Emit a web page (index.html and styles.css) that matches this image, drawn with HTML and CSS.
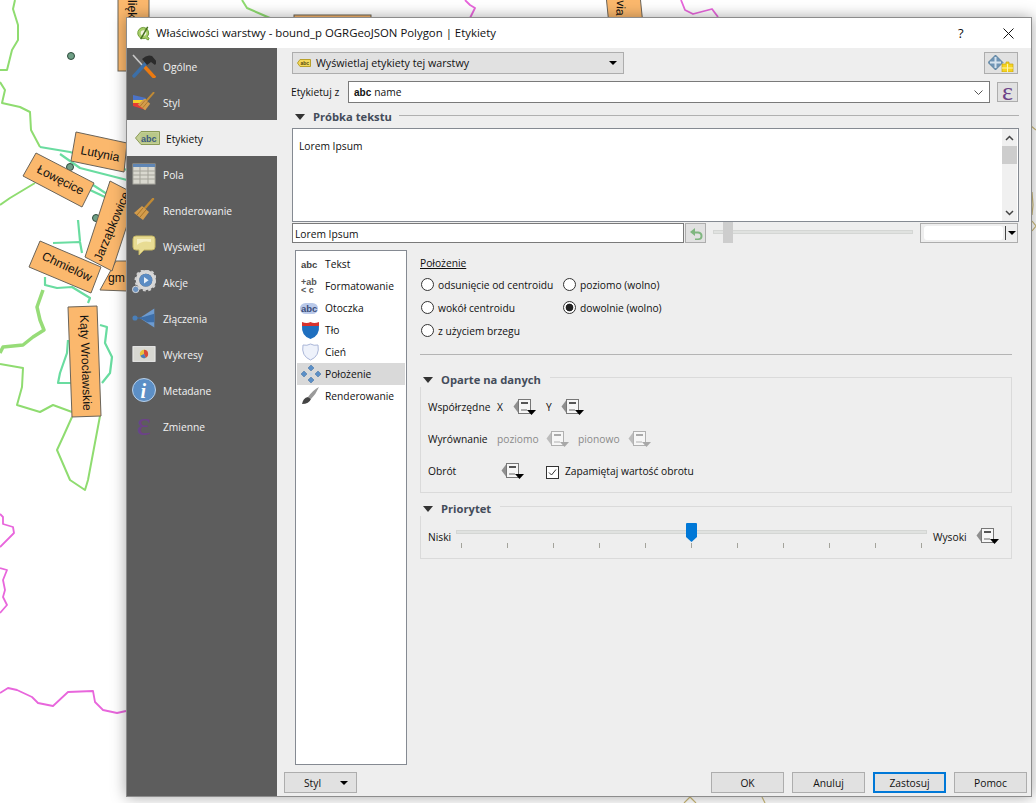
FILE: index.html
```html
<!DOCTYPE html>
<html lang="pl">
<head>
<meta charset="utf-8">
<title>Właściwości warstwy</title>
<link rel="stylesheet" href="styles.css">
</head>
<body>
<svg class="defs" width="0" height="0" aria-hidden="true">
  <defs>
    <symbol id="dd" viewBox="0 0 23 16">
      <path d="M5 1.500 0.500 7.500 5 13.500Z" fill="#8f8f8f"/>
      <rect x="5.500" y="0.500" width="12" height="14" fill="#f6f6f6" stroke="#777"/>
      <path d="M8 4h7" stroke="#555" stroke-width="2"/>
      <path d="M8 11h6" stroke="#666" stroke-width="1"/>
      <path d="M14 11h9l-4.500 5z" fill="#000"/>
    </symbol>
    <symbol id="ddoff" viewBox="0 0 23 16">
      <path d="M5 1.500 0.500 7.500 5 13.500Z" fill="#bcbcbc"/>
      <rect x="5.500" y="0.500" width="12" height="14" fill="#f6f6f6" stroke="#b0b0b0"/>
      <path d="M8 4h7" stroke="#aaa" stroke-width="2"/>
      <path d="M8 11h6" stroke="#b0b0b0" stroke-width="1"/>
      <path d="M14 11h9l-4.500 5z" fill="#a8a8a8"/>
    </symbol>
    <symbol id="brush" viewBox="0 0 24 24">
      <path d="M21 1 13 10" stroke="#c08a35" stroke-width="2.400" stroke-linecap="round"/>
      <path d="M10 8 17 14 11 22 2 15Z" fill="#d39c4c"/>
      <path d="M5 17 11 10M8 19 14 12" stroke="#a87428" stroke-width="1"/>
    </symbol>
    <symbol id="diamonds" viewBox="0 0 20 18">
      <g fill="#5b8fc7" stroke="#3e6c9e" stroke-width=".5">
        <path d="M10 0l3 3-3 3-3-3z"/><path d="M10 12l3 3-3 3-3-3z"/>
        <path d="M3 6l3 3-3 3-3-3z"/><path d="M17 6l3 3-3 3-3-3z"/>
      </g>
      <path d="M10 7l2 2-2 2-2-2z" fill="#c9d6e4"/>
    </symbol>
  </defs>
</svg>

<svg class="map" viewBox="0 0 1036 803" aria-label="Mapa">
  <g class="ln green">
    <polyline points="15,0 13,9 18,25 18,40 12,50 7,70 0,70"/>
    <polyline points="0,82 5,90 2,103 20,107 30,112 31,130 40,147"/>
    <polyline points="35,183 20,192 10,198 0,205"/>
    <polyline points="0,364 23,368 22,387 17,405 40,412 53,405 72,412"/>
    <polyline points="72,417 63,437 57,450 70,480 85,490 88,480 100,416"/>
    <polyline points="242,0 247,8 263,15 270,18"/>
  </g>
  <polyline class="ln thick" points="43,290 37,307 40,320 44,330 33,337 23,345 3,347 0,353"/>
  <g class="ln teal">
    <polyline points="40,147 70,152 127,170"/>
    <polyline points="60,154 80,168 127,180"/>
    <polyline points="90,183 110,196"/>
    <polyline points="90,190 105,197"/>
    <polyline points="45,277 45,285 57,288 72,287 90,298 88,303"/>
    <polyline points="53,243 80,242 82,253"/>
    <polyline points="78,220 80,241"/>
    <polyline points="100,325 107,327 105,343 112,357 110,373 102,383"/>
    <polyline points="68,340 67,353 60,373 58,383 72,383"/>
  </g>
  <g class="ln pink">
    <polyline points="0,693 8,688 17,690 32,697 38,703 53,706 68,692 93,691 95,702 103,710 117,713 126,711"/>
    <polyline points="0,514 3,517 3,524 13,527 14,533 0,547"/>
    <polyline points="0,568 7,570 3,580 5,590 3,597 7,605 0,613"/>
    <polyline points="465,0 470,5 475,8 472,14 470,18"/>
    <polyline points="681,0 685,10 693,14 712,9 718,17"/>
  </g>
  <g class="ln tan">
    <polyline points="1031,126 1036,130"/>
    <polyline points="1032,192 1033,205 1032,215"/>
    <polyline points="1032,221 1036,226 1032,231"/>
    <polyline points="684,803 690,797 696,803"/>
    <polyline points="762,797 765,803"/>
  </g>
  <circle class="dot" cx="71" cy="56" r="3.500"/>
  <circle class="dot" cx="96" cy="218" r="3.500"/>
  <circle class="dot" cx="70" cy="167" r="3.500"/>

  <rect class="lbl" x="118" y="-10" width="31" height="81"/>
  <text class="lbltxt" transform="translate(128,0) rotate(90)">lięk</text>
  <rect class="lbl" x="294" y="15" width="77" height="10"/>
  <polygon class="lbl" points="606,-5 640,-5 643,25 609,25"/>
  <text class="lbltxt" transform="translate(617,0) rotate(93)">via</text>

  <polygon class="lbl" points="76,132 127,143 124,172 71,161"/>
  <text class="lbltxt" transform="translate(80,154) rotate(11)">Lutynia</text>
  <polygon class="lbl" points="36,153 94,183 82,207 23,176"/>
  <text class="lbltxt" transform="translate(36,172) rotate(27)">Łowęcice</text>
  <polygon class="lbl" points="116,261 127,261 127,291 100,290"/>
  <text class="lbltxt" transform="translate(108,282)">gm</text>
  <polygon class="lbl" points="110,181 137,195 112,271 85,257"/>
  <text class="lbltxt" transform="translate(101,262) rotate(-67)">Jarząbkowice</text>
  <polygon class="lbl" points="40,241 101,267 91,293 29,267"/>
  <text class="lbltxt" transform="translate(41,259) rotate(25)">Chmielów</text>
  <polygon class="lbl" points="68,307 97,306 101,416 72,417"/>
  <text class="lbltxt" transform="translate(80,315) rotate(88)">Kąty Wrocławskie</text>
</svg>

<div class="dialog">
  <header class="titlebar">
    <svg class="qgis" viewBox="0 0 16 16">
      <path d="M8 1.500a6 6 0 1 0 2 11.600L13 15l1-2-2-1.500A6 6 0 0 0 8 1.500Z" fill="#a8cf6a" stroke="#6d9a35"/>
      <circle cx="8" cy="7.500" r="3" fill="#f3f3e0"/>
      <path d="M12.500 1 5 14" stroke="#446e1e" stroke-width="1.600"/>
    </svg>
    <span class="title">Właściwości warstwy - bound_p OGRGeoJSON Polygon | Etykiety</span>
    <span class="help">?</span>
    <svg class="close" viewBox="0 0 11 11"><path d="M0.500 0.500l10 10M10.500 0.500l-10 10" stroke="#111" stroke-width="1"/></svg>
  </header>
  <div class="body">
    <nav class="side">
      <div class="item">
        <svg class="sicon" viewBox="0 0 24 24">
          <path d="M1 1 11 12" stroke="#c9c9c9" stroke-width="1.600"/>
          <path d="M11 11 23 24" stroke="#ec7a10" stroke-width="3.600"/>
          <path d="M2 22 14 9" stroke="#3c6fa8" stroke-width="3.400" stroke-linecap="round"/>
          <path d="M10 5Q15 0 20 2L25 8 23 11 19 8 15 11Z" fill="#2b2b2b"/>
        </svg><span>Ogólne</span>
      </div>
      <div class="item">
        <svg class="sicon" viewBox="0 0 24 24">
          <path d="M1 9h13l-2 4H1z" fill="#f3d02a"/><path d="M1 5l13 3-1 2H1z" fill="#4b73c8"/><path d="M1 13h11l2 7-13-4z" fill="#e33c34"/>
          <use href="#brush" x="4" y="2" width="20" height="20"/>
        </svg><span>Styl</span>
      </div>
      <div class="item on">
        <svg class="sicon wide" viewBox="0 0 25 14">
          <path d="M6 .5H24.500V13.500H6L.5 7Z" fill="#c3cf95" stroke="#8c9b57"/>
          <rect x="5.500" y="2" width="17" height="10" fill="#b9c888"/>
          <text class="abc" x="6" y="11">abc</text>
        </svg><span>Etykiety</span>
      </div>
      <div class="item">
        <svg class="sicon" viewBox="0 0 24 24">
          <rect x="1" y="2" width="22" height="20" fill="#d9d8cf" stroke="#a9a9a1"/>
          <rect x="1" y="2" width="22" height="3" fill="#5f86b5"/>
          <path d="M1 9h22M1 13h22M1 17h22M8 5v17M16 5v17" stroke="#a4a39a"/>
        </svg><span>Pola</span>
      </div>
      <div class="item">
        <svg class="sicon" viewBox="0 0 24 24"><use href="#brush" width="24" height="24"/></svg><span>Renderowanie</span>
      </div>
      <div class="item">
        <svg class="sicon" viewBox="0 0 24 24">
          <path d="M4 2H20Q23 2 23 5V13Q23 16 20 16H12L7 21V16H4Q1 16 1 13V5Q1 2 4 2Z" fill="#e8dc93" stroke="#c5b765"/>
          <path d="M5 5H19V8Q10 6 5 11Z" fill="#f5efc5"/>
        </svg><span>Wyświetl</span>
      </div>
      <div class="item">
        <svg class="sicon" viewBox="0 0 26 26">
          <circle cx="15" cy="11" r="9" fill="none" stroke="#d8d8d8" stroke-width="4"/>
          <circle cx="15" cy="11" r="11" fill="none" stroke="#d0d0d0" stroke-width="2.500" stroke-dasharray="3 2.760"/>
          <circle cx="15" cy="11" r="7" fill="#5b8cc4"/>
          <path d="M13 7.500v7l5-3.500z" fill="#e8f0f8"/>
          <circle cx="4" cy="21" r="3.500" fill="#6d93c0" stroke="#ddd"/>
        </svg><span>Akcje</span>
      </div>
      <div class="item">
        <svg class="sicon" viewBox="0 0 28 24">
          <path d="M26 1V23L9 12Z" fill="#6d9bd0"/>
          <path d="M26 7V17H18L9 12Z" fill="#3d6ea8"/>
          <path d="M3 12H12" stroke="#3a6ba3" stroke-width="1.500"/>
          <circle cx="3.500" cy="12" r="3" fill="#4a7fb8"/>
        </svg><span>Złączenia</span>
      </div>
      <div class="item">
        <svg class="sicon" viewBox="0 0 26 18">
          <rect x="1" y="1" width="24" height="16" fill="#d8d8d2" stroke="#f0f0f0"/>
          <circle cx="13" cy="9" r="4.500" fill="#e8c33c"/>
          <path d="M13 9V4.500A4.500 4.500 0 0 1 15 13Z" fill="#d84a3a"/>
          <path d="M13 9 15 13A4.500 4.500 0 0 1 9 11Z" fill="#4a7cc0"/>
        </svg><span>Wykresy</span>
      </div>
      <div class="item">
        <svg class="sicon" viewBox="0 0 24 24">
          <circle cx="12" cy="12" r="11.500" fill="#5c8fc6" stroke="#b9d0e8"/>
          <text class="info" x="8.500" y="20">i</text>
        </svg><span>Metadane</span>
      </div>
      <div class="item">
        <div class="eps">ε</div><span>Zmienne</span>
      </div>
    </nav>
    <main class="main">
      <div class="row1">
        <div class="combo">
          <svg class="tag" viewBox="0 0 14 8">
            <path d="M3 .5H13.500V7.500H3L.5 4Z" fill="#f4d95a" stroke="#b8a02a"/>
            <text class="tagtxt" x="3.500" y="6">abc</text>
          </svg>
          <span class="grow">Wyświetlaj etykiety tej warstwy</span>
          <i class="tri"></i>
        </div>
        <button class="tool">
          <svg class="toolicon" viewBox="0 0 27 17">
            <path d="M7.500 0 15 7.500 7.500 15 0 7.500Z" fill="#6f94b5" stroke="#46708f" stroke-width=".7"/>
            <path d="M7.500 2V13M2 7.500H13" stroke="#d5e2ee" stroke-width="2"/>
            <path d="M14 9h4V7h3v2h4v8H14z" fill="#f5d321" stroke="#c9a70f" stroke-width=".7"/>
            <path d="M19.500 9v8M14 13h11" stroke="#fff6b0"/>
          </svg>
        </button>
      </div>
      <div class="row2">
        <span class="lab-from">Etykietuj z</span>
        <div class="field">
          <b class="abc-mark">abc</b><span class="grow">name</span>
          <svg class="chev" viewBox="0 0 9 5"><path d="M.5 .5l4 4 4-4" fill="none" stroke="#555"/></svg>
        </div>
        <button class="eps-btn"><span>ε</span></button>
      </div>
      <div class="sect">
        <i class="tri big"></i><b class="sect-t">Próbka tekstu</b><span class="sect-line"></span>
      </div>
      <div class="preview">
        <p>Lorem Ipsum</p>
        <div class="sb">
          <svg class="arr" viewBox="0 0 9 6"><path d="M1 5l3.500-3.500L8 5" fill="none" stroke="#444" stroke-width="1.500"/></svg>
          <i class="thumb"></i>
          <span class="grow"></span>
          <svg class="arr" viewBox="0 0 9 6"><path d="M1 1l3.500 3.500L8 1" fill="none" stroke="#444" stroke-width="1.500"/></svg>
        </div>
      </div>
      <div class="row4">
        <div class="sample">Lorem Ipsum</div>
        <button class="undo">
          <svg viewBox="0 0 14 13" width="14" height="13"><path d="M6 1 1 5l5 4V6.500H9Q11.500 6.500 11.500 9T9 11.500H6V13H9.500Q13.500 13 13.500 9T9.500 4.500H6Z" fill="#7fb67f"/></svg>
        </button>
        <div class="hs"><i class="hs-track"></i><i class="hs-handle"></i></div>
        <div class="spin"><span class="spin-in"></span><i class="spin-sep"></i><i class="tri"></i></div>
      </div>
      <div class="lower">
        <ul class="list">
          <li><span class="lic"><b class="ltxt">abc</b></span>Tekst</li>
          <li><span class="lic"><svg viewBox="0 0 19 16" width="19" height="16"><text class="fm1" x="0" y="7">+ab</text><text class="fm1" x="0" y="15">&lt; c</text></svg></span>Formatowanie</li>
          <li><span class="lic"><b class="ltxt halo">abc</b></span>Otoczka</li>
          <li><span class="lic"><svg viewBox="0 0 19 18" width="19" height="18"><path d="M1 4Q10 5 18 4 19 15 9.500 18 0 15 1 4Z" fill="#1f6fbf"/><path d="M1 1Q6 3 9.500 1 13 3 18 1V5H1Z" fill="#d8322e"/></svg></span>Tło</li>
          <li><span class="lic"><svg viewBox="0 0 19 18" width="19" height="18"><path d="M2 2Q6 3 9.500 1 13 3 17 2 19 13 9.500 17 0 13 2 2Z" fill="#eef2fb" stroke="#aab6d8"/></svg></span>Cień</li>
          <li class="sel"><span class="lic"><svg width="20" height="18"><use href="#diamonds" width="20" height="18"/></svg></span>Położenie</li>
          <li><span class="lic"><svg viewBox="0 0 19 18" width="19" height="18"><path d="M18 0Q12 3 7 10L10 12Q15 7 18 0Z" fill="#9a9a9a"/><path d="M7 10Q2 11 1 17 8 17 10 12Z" fill="#444"/></svg></span>Renderowanie</li>
        </ul>
        <section class="panel">
          <h2 class="ph">Położenie</h2>
          <div class="radios">
            <label class="radio"><i class="rb"></i>odsunięcie od centroidu</label>
            <label class="radio"><i class="rb"></i>poziomo (wolno)</label>
            <label class="radio"><i class="rb"></i>wokół centroidu</label>
            <label class="radio"><i class="rb sel-rb"></i>dowolnie (wolno)</label>
            <label class="radio"><i class="rb"></i>z użyciem brzegu</label>
          </div>
          <hr class="sep">
          <div class="group g1">
            <div class="gt"><i class="tri big"></i><b>Oparte na danych</b></div>
            <div class="grow-row">
              <span class="w69">Współrzędne</span><span class="w16">X</span>
              <svg class="dd"><use href="#dd"/></svg>
              <span class="w15 ml10">Y</span>
              <svg class="dd"><use href="#dd"/></svg>
            </div>
            <div class="grow-row">
              <span class="w69">Wyrównanie</span><span class="w49 off">poziomo</span>
              <svg class="dd"><use href="#ddoff"/></svg>
              <span class="w50 ml9 off">pionowo</span>
              <svg class="dd"><use href="#ddoff"/></svg>
            </div>
            <div class="grow-row">
              <span class="w73">Obrót</span>
              <svg class="dd"><use href="#dd"/></svg>
              <span class="check"><svg viewBox="0 0 13 13" width="13" height="13"><rect x=".5" y=".5" width="12" height="12" fill="#fff" stroke="#333"/><path d="M3 6.500l2.500 2.500L10 3.500" fill="none" stroke="#333"/></svg></span>
              <span>Zapamiętaj wartość obrotu</span>
            </div>
          </div>
          <div class="group g2">
            <div class="gt"><i class="tri big"></i><b>Priorytet</b></div>
            <div class="prio">
              <span class="niski">Niski</span>
              <div class="ps">
                <i class="ps-track"></i>
                <div class="ticks"><i></i><i></i><i></i><i></i><i></i><i></i><i></i><i></i><i></i><i></i><i></i></div>
                <svg class="ps-handle" viewBox="0 0 11 19"><path d="M1 0H10Q11 0 11 1V14L5.500 19 0 14V1Q0 0 1 0Z" fill="#0078d7"/></svg>
              </div>
              <span class="wysoki">Wysoki</span>
              <svg class="dd wy"><use href="#dd"/></svg>
            </div>
          </div>
        </section>
      </div>
      <footer class="foot">
        <button class="btn styl"><span class="grow">Styl</span><i class="tri"></i></button>
        <span class="grow"></span>
        <button class="btn">OK</button>
        <button class="btn">Anuluj</button>
        <button class="btn def">Zastosuj</button>
        <button class="btn">Pomoc</button>
      </footer>
    </main>
  </div>
</div>
</body>
</html>
```
FILE: styles.css
```css
* { box-sizing: border-box; }
html, body { margin: 0; padding: 0; }
body {
  position: relative;
  width: 1036px;
  height: 803px;
  overflow: hidden;
  background: #fff;
  font-family: "Open Sans", "Noto Sans", sans-serif;
  font-size: 10.250px;
  line-height: 16px;
  color: #111;
}
.defs { position: absolute; }
.grow { flex: 1 1 auto; }
i { display: block; }

/* map canvas */
.map { position: absolute; inset: 0; width: 1036px; height: 803px; }
.ln polyline, .ln, polyline.ln { fill: none; stroke-linejoin: round; }
.green { stroke: #8fdc70; stroke-width: 2; }
.thick { stroke: #97dc78; stroke-width: 3.500; }
.teal { stroke: #69dca0; stroke-width: 2.200; }
.pink { stroke: #e866dc; stroke-width: 1.800; }
.tan { stroke: #c9b878; stroke-width: 1.200; }
.dot { fill: #6f9f86; stroke: #2d4a3b; stroke-width: 1; }
.lbl { fill: #fbb86d; stroke: #6b6459; stroke-width: 1; }
.lbltxt { font-family: "Liberation Sans", sans-serif; font-size: 12.200px; fill: #111; }

/* window */
.dialog {
  position: absolute;
  left: 126px;
  top: 17px;
  width: 906px;
  height: 780px;
  display: flex;
  flex-direction: column;
  border: 1px solid #8c8c8c;
  background: #eee;
  box-shadow: 0 0 14px rgba(0, 0, 0, .35);
}
.titlebar {
  height: 30px;
  flex: none;
  display: flex;
  align-items: center;
  background: #fff;
  font-size: 11.400px;
  padding-left: 9px;
}
.qgis { width: 15px; height: 15px; margin-right: 5px; }
.title { flex: 1 1 auto; }
.help { width: 10px; font-size: 13px; margin-right: 35px; }
.close { width: 11px; height: 11px; margin-right: 17px; }
.body { flex: 1 1 auto; display: flex; min-height: 0; }

/* sidebar */
.side { width: 150px; flex: none; background: #5d5d5d; }
.item {
  height: 36px;
  display: flex;
  align-items: center;
  padding-left: 5px;
  color: #f2f2f2;
}
.item span { margin-top: 2px; }
.item.on { background: #eee; color: #111; padding-left: 8px; }
.sicon { width: 24px; height: 24px; margin-right: 7px; flex: none; }
.sicon.wide { width: 25px; height: 14px; margin-right: 6px; }
.abc { font: bold 9px "Liberation Sans", sans-serif; fill: #3d5a80; }
.info { font: italic bold 20px "Liberation Serif", serif; fill: #fff; }
.eps {
  width: 24px;
  height: 36px;
  margin-right: 7px;
  flex: none;
  text-align: center;
  font: 34px/32px "Liberation Serif", serif;
  color: #6c4288;
}

/* content */
.main {
  flex: 1 1 auto;
  min-width: 0;
  display: flex;
  flex-direction: column;
  padding: 4px 13px 0 15px;
  background: #eee;
}
.row1 { height: 22px; flex: none; display: flex; justify-content: space-between; }
.combo {
  width: 332px;
  height: 22px;
  display: flex;
  align-items: center;
  padding: 0 6px 0 4px;
  background: #e1e1e1;
  border: 1px solid #adadad;
  font-size: 10.700px;
}
.tag { width: 14px; height: 8px; margin-right: 5px; }
.tagtxt { font: bold 5px "Liberation Sans", sans-serif; fill: #554a10; }
.tri {
  width: 0;
  height: 0;
  flex: none;
  border-left: 4px solid transparent;
  border-right: 4px solid transparent;
  border-top: 4px solid #000;
}
.tri.big { border-left-width: 5px; border-right-width: 5px; border-top: 6px solid #333; }
.tool {
  width: 34px;
  height: 22px;
  padding: 0;
  background: #e1e1e1;
  border: 1px solid #adadad;
  display: flex;
  align-items: center;
  justify-content: center;
}
.toolicon { width: 27px; height: 17px; }
.row2 { height: 22px; flex: none; margin-top: 7px; display: flex; align-items: center; }
.lab-from { width: 57px; margin-left: -1px; }
.field {
  width: 642px;
  height: 22px;
  display: flex;
  align-items: center;
  padding: 0 5px;
  background: #fff;
  border: 1px solid #7a7a7a;
}
.abc-mark { font: bold 10px "Liberation Sans", sans-serif; margin-right: 3px; }
.chev { width: 9px; height: 5px; margin-right: 1px; }
.eps-btn {
  width: 21px;
  height: 20px;
  margin-left: 7px;
  padding: 0;
  background: #e1e1e1;
  border: 1px solid #adadad;
  font: 26px/14px "Liberation Serif", serif;
  color: #6c4288;
}
.sect { height: 12px; flex: none; margin: 8px -1px 0 0; display: flex; align-items: center; padding-left: 3px; }
.sect-t { font-size: 11.200px; font-weight: 700; color: #444c5a; margin: 0 7px 0 8px; }
.sect-line { flex: 1 1 auto; height: 1px; background: #b0b0b0; margin-top: -4px; }
.preview {
  height: 94px;
  flex: none;
  margin: 5px -1px 0 0;
  display: flex;
  background: #fff;
  border: 1px solid #858a92;
}
.preview p { flex: 1 1 auto; margin: 0; padding: 9px 6px; }
.sb { width: 15px; margin-right: 1px; display: flex; flex-direction: column; align-items: center; background: #f0f0f0; }
.arr { width: 9px; height: 6px; margin: 6px 0 5px; flex: none; }
.thumb { width: 15px; height: 18px; background: #cdcdcd; flex: none; }
.row4 { height: 20px; flex: none; margin-top: 1px; display: flex; }
.sample {
  width: 392px;
  padding-left: 2px;
  line-height: 20px;
  background: #fff;
  border: 1px solid #7a7a7a;
}
.undo {
  width: 21px;
  height: 20px;
  margin-left: 1px;
  padding: 0;
  background: #e1e1e1;
  border: 1px solid #adadad;
  display: flex;
  align-items: center;
  justify-content: center;
}
.hs { position: relative; width: 200px; margin-left: 7px; }
.hs-track { height: 4px; margin-top: 7px; background: #e0e2e0; border: 1px solid #d4d6d4; }
.hs-handle { position: absolute; left: 10px; top: -1px; width: 10px; height: 21px; background: #cdcdcd; }
.spin {
  width: 98px;
  margin-left: 7px;
  display: flex;
  align-items: center;
  padding: 2px 1px 2px 3px;
  border: 1px solid #adadad;
  background: #eee;
}
.spin-in { width: 79px; height: 100%; flex: none; background: #fff; border-radius: 3px; }
.spin-sep { width: 1px; height: 100%; flex: none; background: #444; margin: 0 2px 0 2px; }

.lower { height: 515px; flex: none; margin-top: 7px; display: flex; }
.list {
  width: 112px;
  margin: 0 0 0 3px;
  padding: 2px 1px;
  list-style: none;
  background: #fff;
  border: 1px solid #858a92;
}
.list li { height: 22px; display: flex; align-items: center; padding-left: 4px; }
.list li.sel { background: #d9d9d9; }
.lic { width: 24px; flex: none; display: flex; align-items: center; }
.ltxt { font: bold 9.500px "Liberation Sans", sans-serif; color: #444; }
.ltxt.halo { color: #3b4e7a; background: #b9c9ea; border-radius: 6px; padding: 0 1px; margin-left: -1px; }
.fm1 { font: bold 9px "Liberation Sans", sans-serif; fill: #555; }

.panel { width: 592px; margin-left: 13px; flex: none; }
.ph {
  margin: 5px 0 0;
  font-size: inherit;
  font-weight: 400;
  line-height: 16px;
  text-decoration: underline;
}
.radios { margin-top: 2px; display: grid; grid-template-columns: 142px 1fr; grid-auto-rows: 23px; }
.radio { display: flex; align-items: center; padding-left: 1px; }
.rb {
  width: 13px;
  height: 13px;
  margin-right: 4px;
  flex: none;
  border-radius: 50%;
  background: #fff;
  border: 1px solid #333;
}
.sel-rb { background: radial-gradient(circle, #222 0 3.500px, #fff 4.200px); }
.sep { margin: 12px 0 0; height: 1px; border: 0; background: #b4b4b4; }
.group { position: relative; border: 1px solid #dadada; }
.g1 { margin-top: 22px; height: 116px; padding: 21px 0 0 7px; }
.g2 { margin-top: 13px; height: 53px; padding: 16px 0 0 7px; }
.gt {
  position: absolute;
  left: -1px;
  top: -5px;
  height: 14px;
  display: flex;
  align-items: center;
  padding: 0 9px 0 3px;
  background: #eee;
  color: #444c5a;
}
.gt b { margin-left: 8px; font-size: 11.200px; }
.grow-row { height: 16px; margin-bottom: 16px; display: flex; align-items: center; }
.w69 { width: 69px; flex: none; }
.w16 { width: 16px; flex: none; }
.w15 { width: 15px; flex: none; }
.w49 { width: 49px; flex: none; }
.w50 { width: 50px; flex: none; }
.w73 { width: 73px; flex: none; }
.ml10 { margin-left: 10px; }
.ml9 { margin-left: 9px; }
.off { color: #8a8a8a; }
.dd { width: 23px; height: 16px; flex: none; }
.check { display: flex; margin: 2px 6px 0 22px; }
.prio { display: flex; align-items: flex-start; }
.niski { width: 28px; margin-top: 6px; flex: none; }
.ps { position: relative; width: 471px; height: 26px; flex: none; }
.ps-track { height: 4px; margin-top: 7px; background: #e0e2e0; border: 1px solid #d4d6d4; }
.ticks { display: flex; justify-content: space-between; margin-top: 9px; padding: 0 5px; }
.ticks i { width: 1px; height: 5px; background: #a3a39b; }
.ps-handle { position: absolute; left: 230px; top: 0; width: 11px; height: 19px; }
.wysoki { width: 43px; margin: 6px 0 0 6px; flex: none; }
.wy { margin-top: 5px; }
.foot { height: 21px; flex: none; margin: 7px -9px 0 -8px; display: flex; gap: 8px; }
.btn {
  width: 73px;
  height: 21px;
  padding: 0;
  background: #e1e1e1;
  border: 1px solid #adadad;
  font: inherit;
  color: #111;
}
.btn.styl { display: flex; align-items: center; padding: 0 8px 0 0; }
.btn.def { border: 2px solid #0078d7; }
```
